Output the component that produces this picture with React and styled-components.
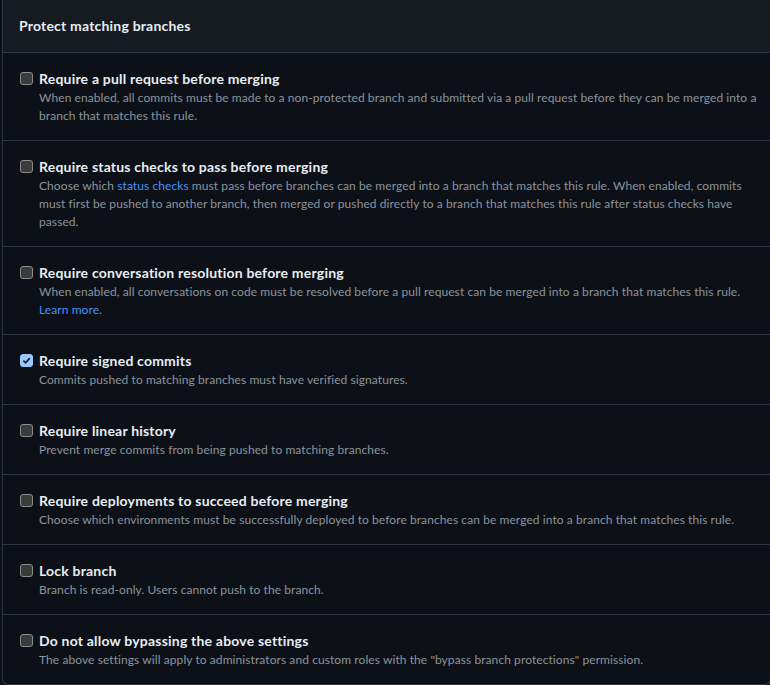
import React from "react"
import styled, { createGlobalStyle } from "styled-components"

const GlobalStyle = createGlobalStyle`
  body {
    margin: 0;
    background: #0d1117;
    font-family: "Segoe UI", Lato, "Noto Sans", sans-serif;
  }
`

const Box = styled.div`
  width: 767px;
  margin-left: 2px;
  border: 1px solid #30363d;
  border-top: none;
  border-radius: 0 0 6px 6px;
  background: #0d1117;
  overflow: hidden;
`

const Header = styled.div`
  height: 53px;
  box-sizing: border-box;
  padding: 0 16px 2px;
  display: flex;
  align-items: center;
  background: #161b22;
  border-bottom: 1px solid #30363d;
  color: #e6edf3;
  font-size: 14px;
  font-weight: 700;
  letter-spacing: 0.2px;
`

const Row = styled.div`
  display: flex;
  gap: 6px;
  padding: 15px 5px 15px 17px;
  border-top: ${({ first }) => (first ? "none" : "1px solid #30363d")};
`

const Check = styled.span`
  flex: none;
  width: 13px;
  height: 13px;
  margin-top: 4px;
  box-sizing: border-box;
  border-radius: 3px;
  border: 1px solid ${({ checked }) => (checked ? "#99c8ff" : "#8b8b8b")};
  background: ${({ checked }) => (checked ? "#99c8ff" : "#3b3b3b")};
  display: flex;
  align-items: center;
  justify-content: center;
`

const Body = styled.div`
  flex: 1;
`

const Title = styled.div`
  color: #e6edf3;
  font-size: 14px;
  font-weight: 700;
  line-height: 21px;
  letter-spacing: 0.2px;
`

const Desc = styled.div`
  color: #8b949e;
  font-size: 12px;
  line-height: 18px;
  letter-spacing: 0.08px;
`

const Link = styled.a`
  color: #4493f8;
  text-decoration: none;
`

const rules = [
  {
    title: "Require a pull request before merging",
    desc: "When enabled, all commits must be made to a non-protected branch and submitted via a pull request before they can be merged into a branch that matches this rule.",
  },
  {
    title: "Require status checks to pass before merging",
    desc: (
      <>
        Choose which <Link href="#">status checks</Link> must pass before
        branches can be merged into a branch that matches this rule. When
        enabled, commits must first be pushed to another branch, then merged or
        pushed directly to a branch that matches this rule after status checks
        have passed.
      </>
    ),
  },
  {
    title: "Require conversation resolution before merging",
    desc: (
      <>
        When enabled, all conversations on code must be resolved before a pull
        request can be merged into a branch that matches this rule.{" "}
        <Link href="#">Learn more</Link>.
      </>
    ),
  },
  {
    title: "Require signed commits",
    desc: "Commits pushed to matching branches must have verified signatures.",
    checked: true,
  },
  {
    title: "Require linear history",
    desc: "Prevent merge commits from being pushed to matching branches.",
  },
  {
    title: "Require deployments to succeed before merging",
    desc: "Choose which environments must be successfully deployed to before branches can be merged into a branch that matches this rule.",
  },
  {
    title: "Lock branch",
    desc: "Branch is read-only. Users cannot push to the branch.",
  },
  {
    title: "Do not allow bypassing the above settings",
    desc: 'The above settings will apply to administrators and custom roles with the "bypass branch protections" permission.',
  },
]

const App = () => {
  return (
    <>
      <GlobalStyle />
      <Box>
        <Header>Protect matching branches</Header>
        {rules.map((r, i) => (
          <Row key={r.title} first={i === 0}>
            <Check checked={r.checked}>
              {r.checked && (
                <svg width="9" height="9" viewBox="0 0 10 10">
                  <path
                    d="M1.5 5.2 L4 7.6 L8.6 2.4"
                    fill="none"
                    stroke="#1a1d22"
                    strokeWidth="1.8"
                  />
                </svg>
              )}
            </Check>
            <Body>
              <Title>{r.title}</Title>
              <Desc>{r.desc}</Desc>
            </Body>
          </Row>
        ))}
      </Box>
    </>
  )
}

export default App
